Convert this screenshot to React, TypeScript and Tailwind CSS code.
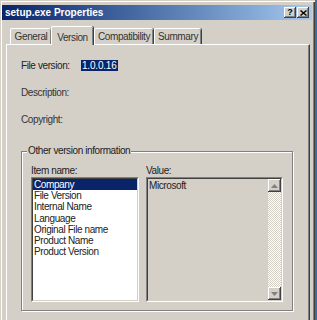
import { memo } from "react";

const face = "#d4d0c8";

function Raised({ className, children }: { className?: string; children?: React.ReactNode }) {
    return (
        <div className={"flex items-center justify-center bg-[#d4d0c8] shadow-[inset_-1px_-1px_0_#404040,inset_1px_1px_0_#fff,inset_-2px_-2px_0_#808080] " + (className ?? "")}>
            {children}
        </div>
    );
}

function Sunken({ className, children }: { className?: string; children?: React.ReactNode }) {
    return (
        <div className={"border border-t-[#808080] border-l-[#808080] border-b-white border-r-white " + (className ?? "")}>
            <div className="h-full w-full border border-t-[#404040] border-l-[#404040] border-b-[#d4d0c8] border-r-[#d4d0c8]">
                {children}
            </div>
        </div>
    );
}

const items = ["Company", "File Version", "Internal Name", "Language", "Original File name", "Product Name", "Product Version"];

function App() {
    return (
        <div className="w-[317px] h-[320px] overflow-hidden bg-[#3a6ea5] font-['Liberation_Sans',Arial,sans-serif] text-[10px] tracking-[-0.4px] text-[#222]">
            <div className="w-[315px] h-[320px] bg-[#d4d0c8] pt-[5px] pl-[2px] pr-[3px] shadow-[inset_1px_1px_0_#d4d0c8,inset_2px_2px_0_#fff,inset_-1px_0_0_#404040,inset_-2px_0_0_#808080]">
                {/* title bar */}
                <div className="h-[15px] flex items-center justify-between pl-[3px] pr-[3px] bg-linear-to-r from-[#0a246a] to-[#a6caf0]">
                    <span className="text-white font-bold text-[10px] tracking-normal leading-[15px]">setup.exe Properties</span>
                    <div className="flex gap-[1px]">
                        <Raised className="w-[12px] h-[11px]">
                            <span className="font-bold text-[9px] leading-[9px] text-black tracking-normal">?</span>
                        </Raised>
                        <Raised className="w-[12px] h-[11px]">
                            <svg width="7" height="6" viewBox="0 0 7 6">
                                <path d="M0.5 0.5 L6.5 5.5 M6.5 0.5 L0.5 5.5" stroke="#000" strokeWidth="1.4" />
                            </svg>
                        </Raised>
                    </div>
                </div>

                {/* tabs */}
                <div className="relative z-10 mt-[6px] h-[18px] flex items-end pl-[8px] text-[#333]">
                    <div className="w-[41px] h-[16px] flex items-center justify-center rounded-t-[2px] border-t border-l border-white shadow-[inset_-1px_0_0_#808080,1px_0_0_#404040]">General</div>
                    <div className="w-[42px] h-[19px] -mb-px flex items-start pt-[3px] justify-center rounded-t-[2px] bg-[#d4d0c8] border-t border-l border-white shadow-[inset_-1px_0_0_#808080,1px_0_0_#404040]">Version</div>
                    <div className="ml-[1px] w-[59px] h-[16px] flex items-center justify-center rounded-t-[2px] border-t border-l border-white shadow-[inset_-1px_0_0_#808080,1px_0_0_#404040]">Compatibility</div>
                    <div className="ml-[1px] w-[47px] h-[16px] flex items-center justify-center rounded-t-[2px] border-t border-l border-white shadow-[inset_-1px_0_0_#808080,1px_0_0_#404040]">Summary</div>
                </div>

                {/* tab panel */}
                <div className="ml-[4px] w-[304px] h-[300px] border-t border-l border-white border-r border-r-[#404040] shadow-[inset_-1px_0_0_#808080]">
                    <div className="pt-[14px] pl-[14px] flex flex-col">
                        <div className="h-[12px] flex items-center">
                            <span className="w-[60px]">File version:</span>
                            <span className="bg-[#0a246a] text-white px-[1px] leading-[11px] tracking-[-0.2px]">1.0.0.16</span>
                        </div>
                        <div className="mt-[15px] h-[12px] flex items-center text-[#333]">Description:</div>
                        <div className="mt-[15px] h-[12px] flex items-center text-[#333]">Copyright:</div>

                        {/* group box */}
                        <div className="relative mt-[26px] w-[272px] h-[160px] border border-[#808080] shadow-[inset_1px_1px_0_#fff,1px_1px_0_#fff]">
                            <span className="absolute top-[-7px] left-[5px] px-[1px] bg-[#d4d0c8] leading-[12px]">Other version information</span>
                            <div className="pt-[12px] pl-[9px] flex gap-[7px]">
                                <div className="flex flex-col w-[108px]">
                                    <div className="h-[12px] flex items-center">Item name:</div>
                                    <Sunken className="mt-[1px] h-[125px]">
                                        <div className="h-full bg-white flex flex-col leading-[11.2px]">
                                            {items.map((it, i) => (
                                                <div key={it} className={"pl-[1px] " + (i === 0 ? "bg-[#0a246a] text-white" : "text-[#222]")}>{it}</div>
                                            ))}
                                        </div>
                                    </Sunken>
                                </div>
                                <div className="flex flex-col w-[137px]">
                                    <div className="h-[12px] flex items-center">Value:</div>
                                    <Sunken className="mt-[1px] h-[125px]">
                                        <div className="h-full flex" style={{ backgroundColor: face }}>
                                            <div className="flex-1 pl-[1px] pt-[1px] leading-[11.2px]">Microsoft</div>
                                            <div className="w-[13px] h-full flex flex-col">
                                                <Raised className="h-[13px]">
                                                    <svg width="7" height="4" viewBox="0 0 7 4"><path d="M3.5 0 L7 4 L0 4 Z" fill="#808080" /></svg>
                                                </Raised>
                                                <div className="flex-1 bg-[repeating-conic-gradient(#fff_0%_25%,#d4d0c8_0%_50%)] bg-[length:2px_2px]" />
                                                <Raised className="h-[13px]">
                                                    <svg width="7" height="4" viewBox="0 0 7 4"><path d="M0 0 L7 0 L3.5 4 Z" fill="#808080" /></svg>
                                                </Raised>
                                            </div>
                                        </div>
                                    </Sunken>
                                </div>
                            </div>
                        </div>
                    </div>
                </div>
            </div>
        </div>
    );
}

export default memo(App);
